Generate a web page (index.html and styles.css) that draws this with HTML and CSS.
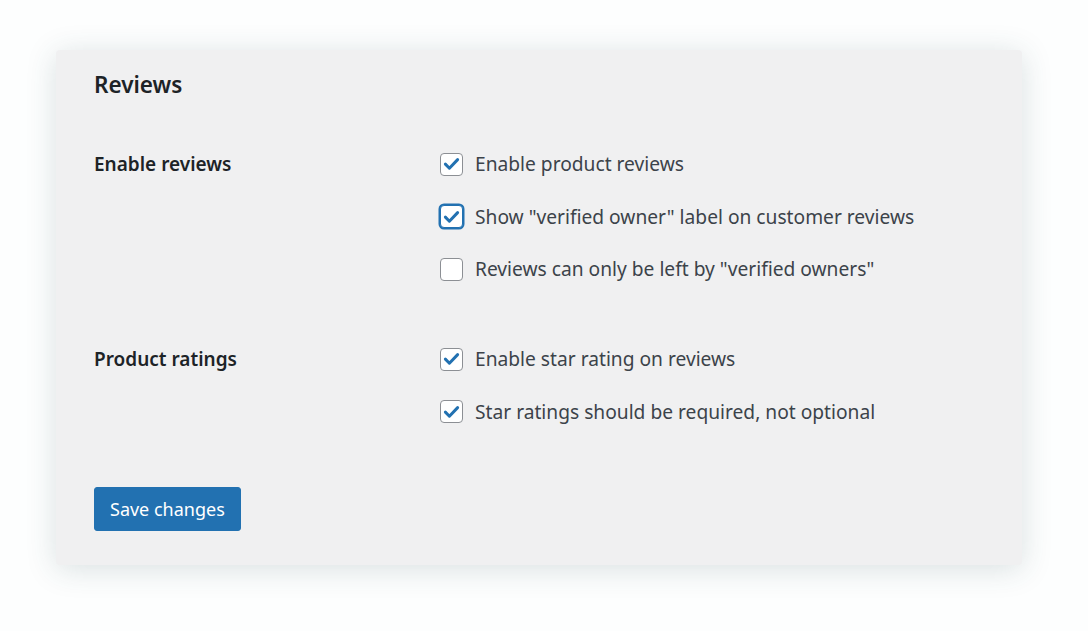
FILE: index.html
```html
<!DOCTYPE html>
<html>
<head>
<meta charset="utf-8">
<link rel="stylesheet" href="styles.css">
</head>
<body>
<div class="card">
  <h2 class="title">Reviews</h2>
  <div class="section">
    <div class="label">Enable reviews</div>
    <div class="options">
      <label class="opt"><span class="box checked"><svg viewBox="0 0 24 24"><path d="M5 12.2l4.6 4.6L19 7"/></svg></span>Enable product reviews</label>
      <label class="opt"><span class="box checked focus"><svg viewBox="0 0 24 24"><path d="M5 12.2l4.6 4.6L19 7"/></svg></span>Show "verified owner" label on customer reviews</label>
      <label class="opt"><span class="box"></span>Reviews can only be left by "verified owners"</label>
    </div>
  </div>
  <div class="section">
    <div class="label">Product ratings</div>
    <div class="options">
      <label class="opt"><span class="box checked"><svg viewBox="0 0 24 24"><path d="M5 12.2l4.6 4.6L19 7"/></svg></span>Enable star rating on reviews</label>
      <label class="opt"><span class="box checked"><svg viewBox="0 0 24 24"><path d="M5 12.2l4.6 4.6L19 7"/></svg></span>Star ratings should be required, not optional</label>
    </div>
  </div>
  <button class="btn">Save changes</button>
</div>
</body>
</html>
```
FILE: styles.css
```css
html, body {
  margin: 0;
  padding: 0;
  background: #fdfefe;
}
body {
  font-family: "Noto Sans", "Open Sans", sans-serif;
  padding: 50px 66px 66px 56px;
}
.card {
  width: 966px;
  height: 515px;
  box-sizing: border-box;
  background: #f0f0f1;
  border-radius: 4px;
  box-shadow: 0 4px 30px rgba(40, 75, 85, 0.17);
  padding: 19px 38px 0 38px;
}
.title {
  margin: 0;
  font-size: 22.5px;
  font-weight: 600;
  color: #1d2327;
  line-height: 32px;
}
.section {
  display: grid;
  grid-template-columns: 346px 1fr;
  margin-top: 50px;
}
.section + .section {
  margin-top: 64px;
}
.label {
  font-size: 19px;
  font-weight: 600;
  color: #1d2327;
  line-height: 26px;
}
.options {
  display: flex;
  flex-direction: column;
  gap: 26.5px;
}
.opt {
  display: flex;
  align-items: center;
  font-size: 19.2px;
  color: #3c434a;
  line-height: 26px;
  height: 26px;
}
.box {
  width: 23px;
  height: 23px;
  box-sizing: border-box;
  border: 1px solid #8c8f94;
  border-radius: 4px;
  background: #fff;
  margin-right: 12px;
  display: flex;
  align-items: center;
  justify-content: center;
  flex: none;
}
.box svg {
  width: 22px;
  height: 22px;
  fill: none;
  stroke: #2271b1;
  stroke-width: 3.4;
  stroke-linecap: round;
  stroke-linejoin: round;
}
.box.focus {
  border-color: #2271b1;
  box-shadow: 0 0 0 1.5px #2271b1;
}
.btn {
  margin-top: 62px;
  display: block;
  background: #2271b1;
  color: #fff;
  border: 1px solid #2271b1;
  border-radius: 3px;
  font-family: inherit;
  font-size: 18px;
  height: 44px;
  padding: 0 15px;
}
```
